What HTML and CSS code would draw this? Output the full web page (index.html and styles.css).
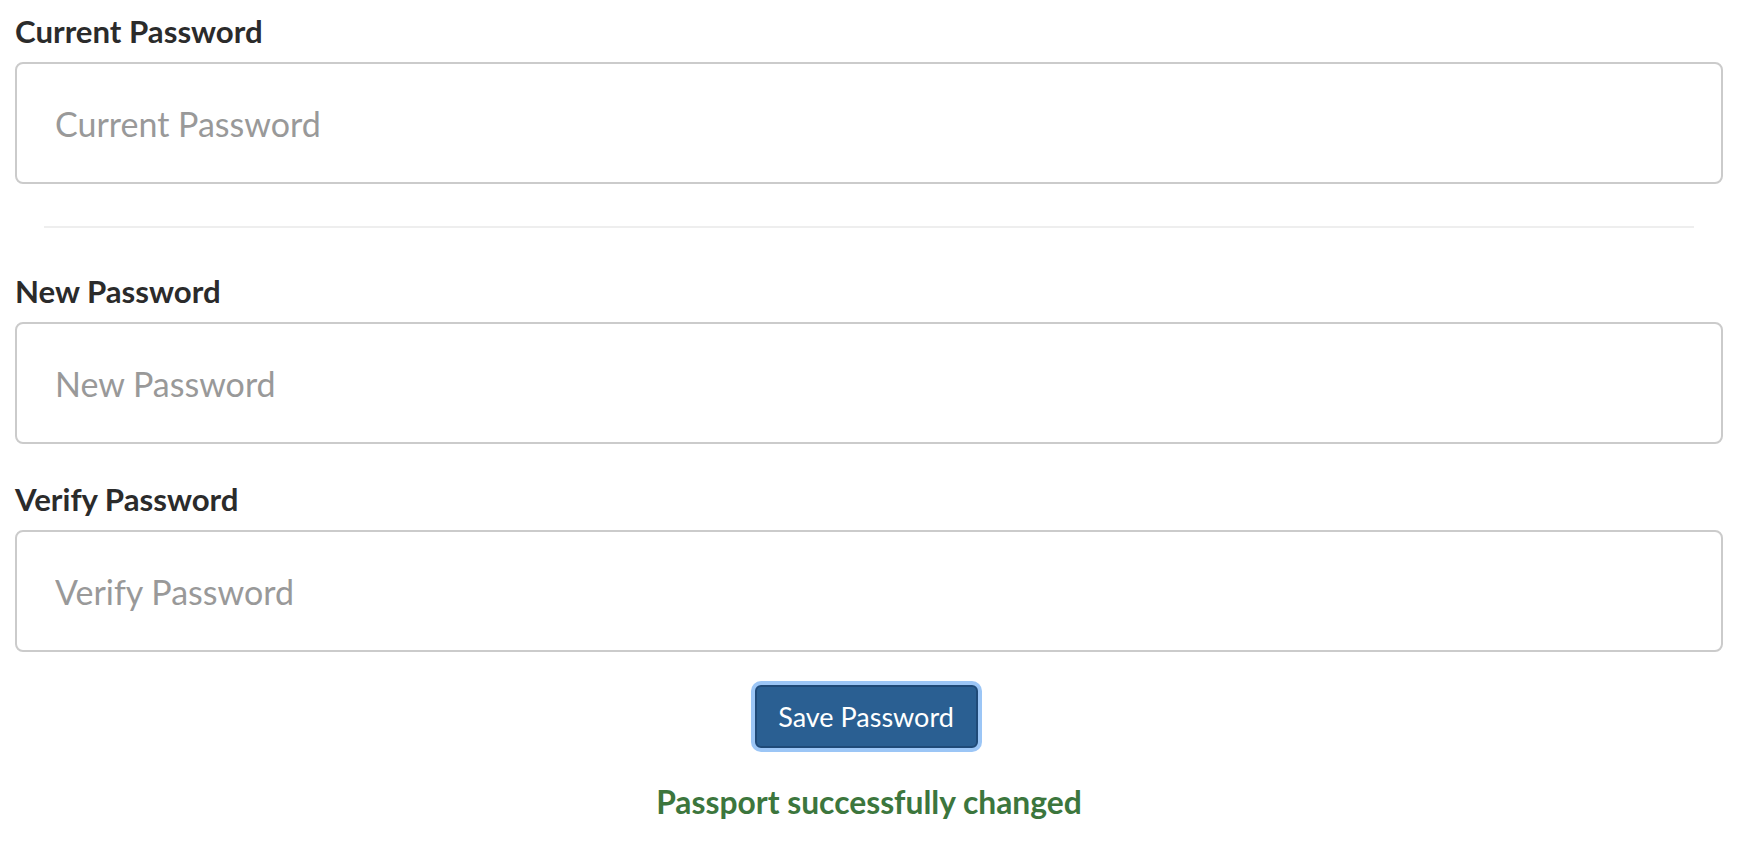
FILE: index.html
```html
<!DOCTYPE html>
<html>
<head>
<meta charset="utf-8">
<link rel="stylesheet" href="styles.css">
</head>
<body>
<form class="pw-form">
  <div class="group">
    <label class="lbl" for="cur">Current Password</label>
    <input class="field" id="cur" type="password" placeholder="Current Password">
  </div>
  <hr class="sep">
  <div class="group group-new">
    <label class="lbl" for="np">New Password</label>
    <input class="field" id="np" type="password" placeholder="New Password">
  </div>
  <div class="group group-verify">
    <label class="lbl" for="vp">Verify Password</label>
    <input class="field" id="vp" type="password" placeholder="Verify Password">
  </div>
  <div class="actions">
    <button type="button" class="btn">Save Password</button>
  </div>
  <p class="success">Passport successfully changed</p>
</form>
</body>
</html>
```

FILE: styles.css
```css
html, body {
  margin: 0;
  padding: 0;
  background: #fff;
}
body {
  font-family: Lato, "Open Sans", sans-serif;
  color: #333;
}
.pw-form {
  padding: 0 23px 0 15px;
  display: flex;
  flex-direction: column;
}
.group {
  display: flex;
  flex-direction: column;
}
.lbl {
  font-weight: 700;
  font-size: 31.2px;
  line-height: 36px;
  height: 36px;
  margin-top: 13px;
  margin-bottom: 13px;
  color: #2b2b2b;
}
.field {
  box-sizing: border-box;
  height: 122px;
  width: 100%;
  border: 2px solid #cbcbcb;
  border-radius: 8px;
  padding: 0 38px;
  font-family: Lato, "Open Sans", sans-serif;
  font-size: 34px;
  color: #555;
  background: #fff;
  outline: none;
}
.field::placeholder {
  color: #999;
}
.sep {
  border: 0;
  border-top: 2px solid #eee;
  margin: 42px 29px 0;
  height: 0;
}
.group-new .lbl {
  margin-top: 45px;
}
.group-verify .lbl {
  margin-top: 37px;
}
.actions {
  display: flex;
  justify-content: center;
  margin-top: 33px;
}
.btn {
  width: 223px;
  height: 63px;
  background: #2a5f92;
  border: 2px solid #1f4a78;
  border-radius: 6px;
  color: #fff;
  font-family: Lato, "Open Sans", sans-serif;
  font-size: 27px;
  font-weight: 400;
  box-shadow: 0 0 0 4px #9cc6f6;
  margin-left: -6px;
}
.success {
  margin: 35px 0 0;
  text-align: center;
  font-weight: 700;
  font-size: 31.8px;
  color: #3c763d;
}
```
